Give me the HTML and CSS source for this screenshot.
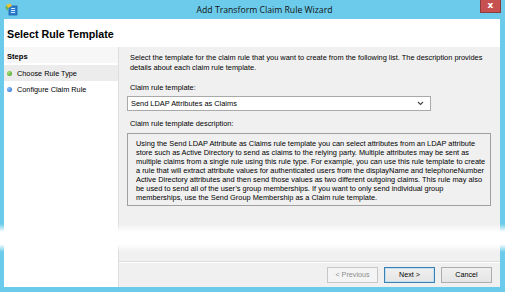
FILE: index.html
```html
<!DOCTYPE html>
<html>
<head>
<meta charset="utf-8">
<link rel="stylesheet" href="styles.css">
</head>
<body>
<div class="window">
  <div class="titlebar">
    <svg class="app-icon" width="13" height="13" viewBox="0 0 13 13">
      <rect x="4" y="3" width="8" height="9" fill="#2f7fd0" stroke="#1b5fa8" stroke-width="0.8"/>
      <rect x="6" y="5" width="4" height="1" fill="#cfe6ff"/>
      <rect x="6" y="7" width="4" height="1" fill="#cfe6ff"/>
      <rect x="6" y="9" width="4" height="1" fill="#cfe6ff"/>
      <path d="M1 2 L5 0.5 L7 3 L3 5 Z" fill="#f2c230"/>
      <path d="M1 2 L3 5 L2.5 8 L0.5 5 Z" fill="#6ab04c"/>
    </svg>
    <div class="title">Add Transform Claim Rule Wizard</div>
    <div class="close">x</div>
  </div>
  <div class="client">
    <div class="header">Select Rule Template</div>
    <div class="body">
      <div class="steps">
        <div class="steps-head">Steps</div>
        <div class="step current"><span class="dot green"></span>Choose Rule Type</div>
        <div class="step"><span class="dot blue"></span>Configure Claim Rule</div>
      </div>
      <div class="main">
        <div class="content">
          <p class="intro">Select the template for the claim rule that you want to create from the following list. The description provides<br>details about each claim rule template.</p>
          <div class="label">Claim rule template:</div>
          <div class="select">
            <span>Send LDAP Attributes as Claims</span>
            <svg class="chev" width="7" height="5" viewBox="0 0 7 5"><path d="M1 1 L3.5 3.5 L6 1" fill="none" stroke="#444" stroke-width="1.1"/></svg>
          </div>
          <div class="label label2">Claim rule template description:</div>
          <div class="desc">
            Using the Send LDAP Attribute as Claims rule template you can select attributes from an LDAP attribute<br>
            store such as Active Directory to send as claims to the relying party. Multiple attributes may be sent as<br>
            multiple claims from a single rule using this rule type. For example, you can use this rule template to create<br>
            a rule that will extract attribute values for authenticated users from the displayName and telephoneNumber<br>
            Active Directory attributes and then send those values as two different outgoing claims. This rule may also<br>
            be used to send all of the user’s group memberships. If you want to only send individual group<br>
            memberships, use the Send Group Membership as a Claim rule template.
          </div>
        </div>
        <div class="footer">
          <div class="btn disabled">&lt; Previous</div>
          <div class="btn default">Next &gt;</div>
          <div class="btn">Cancel</div>
        </div>
      </div>
    </div>
  </div>
  <div class="glare"></div>
</div>
</body>
</html>
```

FILE: styles.css
```css
html, body {
  margin: 0;
  padding: 0;
}
body {
  width: 505px;
  height: 292px;
  overflow: hidden;
  background: #6ccbea;
  font-family: "Liberation Sans", Arial, sans-serif;
}
.window {
  position: relative;
  width: 505px;
  height: 292px;
  display: flex;
  flex-direction: column;
  background: #6ccbea;
}
.titlebar {
  position: relative;
  height: 19px;
  display: flex;
  align-items: center;
  justify-content: center;
}
.app-icon {
  position: absolute;
  left: 5px;
  top: 3px;
}
.title {
  font-family: "Open Sans", "Noto Sans", sans-serif;
  font-size: 8.7px;
  color: #111;
  margin-left: 24px;
}
.close {
  position: absolute;
  right: 4px;
  top: 0;
  width: 21px;
  height: 13px;
  background: #c75050;
  border: 1px solid #8e3b3b;
  border-top: none;
  box-sizing: border-box;
  color: #fff;
  font-family: "DejaVu Sans", sans-serif;
  font-weight: bold;
  font-size: 9px;
  line-height: 11px;
  text-align: center;
}
.client {
  flex: 1;
  margin: 0 5px 5px 4px;
  background: #fff;
  display: flex;
  flex-direction: column;
}
.header {
  height: 28px;
  padding-left: 3px;
  font-weight: bold;
  font-size: 10.7px;
  line-height: 30px;
  color: #000;
}
.body {
  flex: 1;
  display: flex;
}
.steps {
  width: 114px;
  background: #fff;
  border-right: 1px solid #dedede;
  font-size: 7.3px;
  color: #000;
}
.steps-head {
  font-weight: bold;
  font-size: 7.6px;
  padding: 5px 0 0 3px;
  height: 11px;
  background: #f7f7f7;
}
.step {
  height: 16px;
  display: flex;
  align-items: center;
  padding-left: 3px;
}
.step.current {
  margin-top: 2px;
  background: #ececec;
}
.dot {
  width: 5px;
  height: 5px;
  border-radius: 50%;
  margin-right: 5px;
}
.dot.green {
  background: radial-gradient(circle at 35% 35%, #a5e07a, #3e9a1c);
}
.dot.blue {
  background: radial-gradient(circle at 35% 35%, #8cc4ff, #1f5fd0);
}
.main {
  flex: 1;
  background: #f0f0f0;
  display: flex;
  flex-direction: column;
  font-size: 7.4px;
  color: #000;
}
.content {
  flex: 1;
  padding: 6px 8px 0 11px;
}
.intro {
  margin: 0;
  line-height: 10px;
}
.label {
  margin-top: 10px;
  line-height: 10px;
}
.select {
  margin: 3px 0 0 -3px;
  width: 304px;
  height: 15px;
  box-sizing: border-box;
  background: #fff;
  border: 1px solid #a9a9a9;
  display: flex;
  align-items: center;
  justify-content: space-between;
  padding: 0 6px 0 3px;
}
.label2 {
  margin-top: 8px;
}
.desc {
  margin: 4px 0 0 -3px;
  width: 364px;
  height: 73px;
  box-sizing: border-box;
  border: 1px solid #a0a0a0;
  padding: 5px 0 0 8px;
  line-height: 9px;
}
.footer {
  height: 25px;
  border-top: 1px solid #dcdcdc;
  box-shadow: inset 0 1px 0 #fff;
  display: flex;
  justify-content: flex-end;
  align-items: center;
  gap: 6px;
  padding-right: 8px;
}
.btn {
  width: 51px;
  height: 16px;
  box-sizing: border-box;
  border: 1px solid #adadad;
  background: linear-gradient(#f0f0f0, #e5e5e5);
  font-size: 7.2px;
  display: flex;
  align-items: center;
  justify-content: center;
  color: #000;
}
.btn.disabled {
  color: #8d8d8d;
  border-color: #c7c7c7;
  background: #f4f4f4;
}
.btn.default {
  border-color: #3c7fb1;
  box-shadow: inset 0 0 0 1px #bfe0f5;
}
.glare {
  position: absolute;
  left: 0;
  right: 0;
  top: 224px;
  height: 28px;
  background: linear-gradient(rgba(255,255,255,0), #fff 28%, #fff 72%, rgba(255,255,255,0));
  pointer-events: none;
}
```
